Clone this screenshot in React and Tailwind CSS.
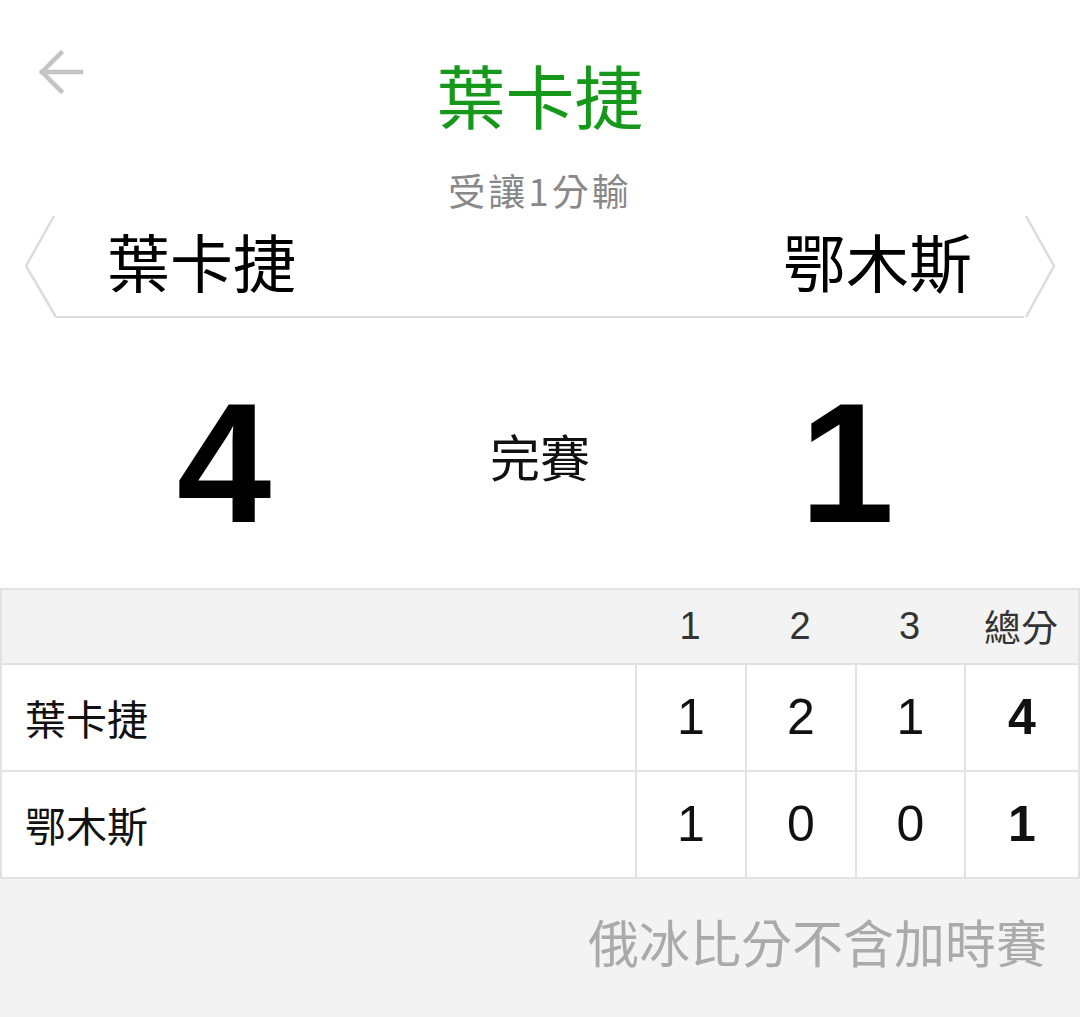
import React from "react";

const cjk = "font-['Noto_Sans_CJK_TC','Noto_Sans',sans-serif]";
const num = "font-['Liberation_Sans','Noto_Sans_CJK_TC',sans-serif]";

const periods = ["1", "2", "3"];
const rows = [
  { name: "葉卡捷", scores: [1, 2, 1], total: 4 },
  { name: "鄂木斯", scores: [1, 0, 0], total: 1 },
];

function BackArrow() {
  return (
    <svg width="48" height="48" viewBox="0 0 48 48" fill="none" stroke="#c4c4c4" strokeWidth="4.5" strokeLinecap="square">
      <path d="M6 24h39" />
      <path d="M25 5 6 24l19 19" />
    </svg>
  );
}

function Chevron({ side }) {
  const d = side === "left" ? "M30 0 2 50l30 51" : "M2 0l28 50-28 51";
  return (
    <svg width="32" height="102" viewBox="0 0 32 102" fill="none" stroke="#dcdcdc" strokeWidth="2.5" className="shrink-0">
      <path d={d} />
    </svg>
  );
}

export default function App() {
  return (
    <div className={`w-[1080px] h-[1017px] bg-[#f3f3f3] flex flex-col ${cjk}`}>
      <div className="bg-white">
        <div className="grid grid-cols-[1fr_auto_1fr] pt-[48px]">
          <div className="pl-[36px]">
            <BackArrow />
          </div>
          <h1 className="mt-[6px] text-[69px] leading-[80px] text-[#16991a]">葉卡捷</h1>
          <div />
        </div>
        <p className="mt-[34px] mb-[4px] text-center text-[37px] leading-[44px] tracking-[3px] text-[#888888]">
          受讓1分輸
        </p>

        <div className="flex px-[24px]">
          <Chevron side="left" />
          <div className="flex-1 flex items-center justify-between h-[102px] border-b-[2.5px] border-[#dcdcdc] pl-[51px] pr-[52px] text-[63px] leading-none text-black">
            <span className="-mt-[14px]">葉卡捷</span>
            <span className="-mt-[14px]">鄂木斯</span>
          </div>
          <Chevron side="right" />
        </div>

        <div className="grid grid-cols-[448px_184px_448px] pt-[60px] pb-[40px]">
          <div className={`text-center text-[170px] leading-[170px] font-bold text-black ${num}`}>4</div>
          <div className="text-center text-[50px] leading-[60px] text-[#111] mt-[47px]">完賽</div>
          <div className={`text-center text-[170px] leading-[170px] font-bold text-black pr-[18px] ${num}`}>1</div>
        </div>
      </div>

      <div className="border-2 border-[#e2e2e2] bg-white">
        <div className="grid grid-cols-[633px_110px_110px_109px_1fr] h-[75px] bg-[#f3f3f3] border-b-2 border-[#e2e2e2] items-center text-[38px] text-[#333]">
          <div />
          {periods.map((p) => (
            <div key={p} className={`text-center ${num}`}>{p}</div>
          ))}
          <div className="text-center text-[37px]">總分</div>
        </div>
        {rows.map((r, i) => (
          <div
            key={r.name}
            className={`grid grid-cols-[633px_110px_110px_109px_1fr] ${i === 0 ? "h-[107px] border-b-2 border-[#e2e2e2]" : "h-[105px]"}`}
          >
            <div className="flex items-center pl-[23px] text-[41px] text-[#111]">{r.name}</div>
            {r.scores.map((s, j) => (
              <div key={j} className={`flex items-center justify-center border-l-2 border-[#e2e2e2] text-[50px] text-[#111] ${num}`}>
                {s}
              </div>
            ))}
            <div className={`flex items-center justify-center border-l-2 border-[#e2e2e2] text-[50px] font-bold text-[#111] ${num}`}>
              {r.total}
            </div>
          </div>
        ))}
      </div>

      <p className="mt-[32px] pr-[33px] text-right text-[51px] leading-[60px] text-[#aaaaaa]">俄冰比分不含加時賽</p>
    </div>
  );
}
